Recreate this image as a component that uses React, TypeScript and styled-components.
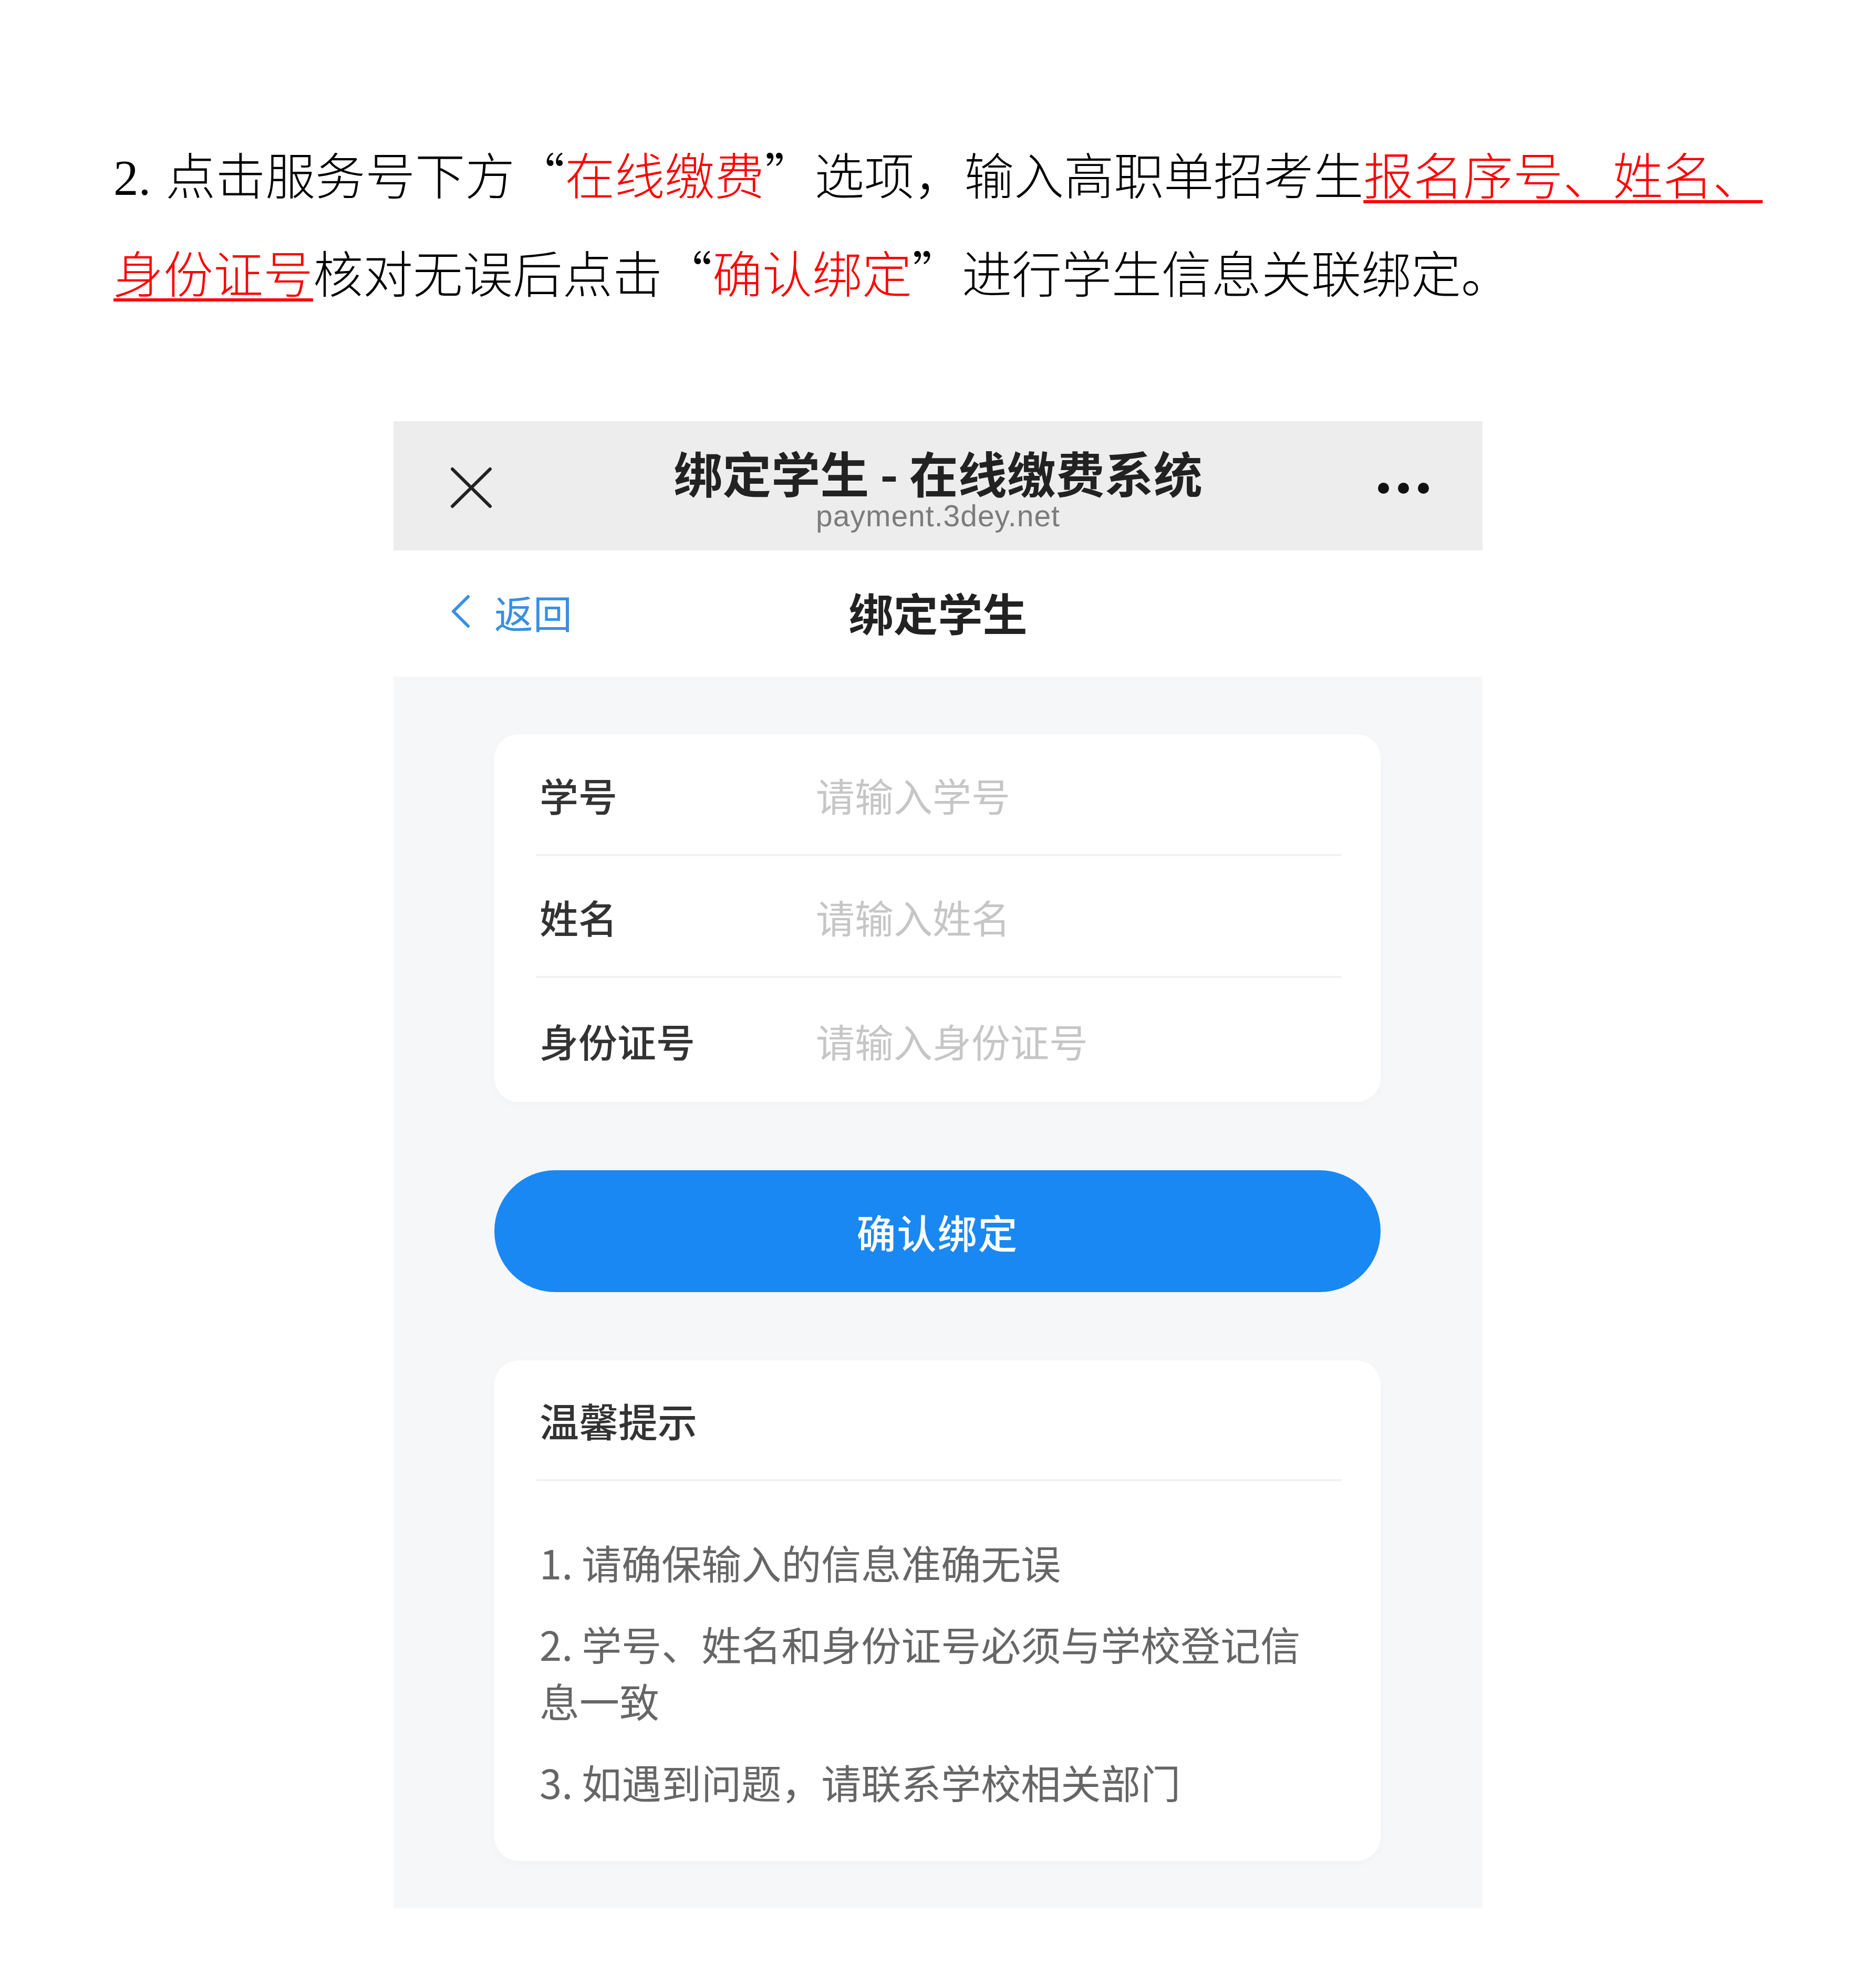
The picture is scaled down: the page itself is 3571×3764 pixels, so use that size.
import React from 'react';
import styled, { createGlobalStyle } from 'styled-components';

const GlobalStyle = createGlobalStyle`
  *, *::before, *::after {
    box-sizing: border-box;
  }
  html, body {
    margin: 0;
    padding: 0;
    background: #ffffff;
  }
  body {
    width: 3571px;
    min-height: 3764px;
    font-family: "Noto Sans CJK SC", "Noto Sans", sans-serif;
  }
`;

const ui = '"Noto Sans CJK SC", "Noto Sans", sans-serif';

interface Field {
  label: string;
  placeholder: string;
}

const fields: Field[] = [
  { label: '学号', placeholder: '请输入学号' },
  { label: '姓名', placeholder: '请输入姓名' },
  { label: '身份证号', placeholder: '请输入身份证号' },
];

const tips = [
  '1. 请确保输入的信息准确无误',
  '2. 学号、姓名和身份证号必须与学校登记信息一致',
  '3. 如遇到问题，请联系学校相关部门',
];

const CloseIcon = () => (
  <svg width="80" height="80" viewBox="0 0 80 80">
    <path d="M4 5 L76 76 M76 5 L4 76" stroke="#222" strokeWidth="6" strokeLinecap="round" fill="none" />
  </svg>
);

const BackChevron = () => (
  <svg width="40" height="64" viewBox="0 0 40 64">
    <path d="M34 4 L6 32 L34 60" stroke="#3a8fe0" strokeWidth="6" strokeLinecap="round" strokeLinejoin="round" fill="none" />
  </svg>
);

export default function App() {
  return (
    <>
      <GlobalStyle />
      <Page>
        <Instruction lang="zh-CN">
          <Num>2.</Num>点击服务号下方“<Red>在线缴费</Red>”选项，输入高职单招考生
          <RedLine>报名序号、姓名、</RedLine>
          <RedLine>身份证号</RedLine>核对无误后点击“<Red>确认绑定</Red>”进行学生信息关联绑定。
        </Instruction>

        <Phone lang="zh-CN">
          <TopBar>
            <TopLeft>
              <CloseIcon />
            </TopLeft>
            <TopTitle>
              <PageName>绑定学生 - 在线缴费系统</PageName>
              <Domain>payment.3dey.net</Domain>
            </TopTitle>
            <TopRight>
              <Dot />
              <Dot />
              <Dot />
            </TopRight>
          </TopBar>

          <NavBar>
            <BackLink>
              <BackChevron />
              <span>返回</span>
            </BackLink>
            <NavTitle>绑定学生</NavTitle>
            <span />
          </NavBar>

          <Body>
            <Card>
              {fields.map((f) => (
                <FieldRow key={f.label}>
                  <FieldLabel>{f.label}</FieldLabel>
                  <Placeholder>{f.placeholder}</Placeholder>
                </FieldRow>
              ))}
            </Card>

            <BindButton>确认绑定</BindButton>

            <Card>
              <TipsTitle>温馨提示</TipsTitle>
              <TipsList>
                {tips.map((t) => (
                  <TipItem key={t}>{t}</TipItem>
                ))}
              </TipsList>
            </Card>
          </Body>
        </Phone>
      </Page>
    </>
  );
}

const Page = styled.div`
  width: 3571px;
  min-height: 3764px;
  padding-top: 236px;
`;

const Instruction = styled.p`
  margin: 0 0 0 216px;
  width: 3180px;
  font-family: "Noto Sans CJK SC", sans-serif;
  font-weight: 300;
  font-size: 95px;
  line-height: 187px;
  color: #000;
  font-feature-settings: "fwid";
`;

const Num = styled.span`
  font-family: "Liberation Serif", serif;
  line-height: 1;
  margin-right: 28px;
`;

const Red = styled.span`
  color: #ff0000;
`;

const RedLine = styled(Red)`
  text-decoration: underline;
  text-decoration-thickness: 6px;
  text-underline-offset: 10px;
`;

const Phone = styled.div`
  width: 2073px;
  margin: 192px auto 0;
  background: #f6f7f9;
  font-family: ${ui};
`;

const TopBar = styled.div`
  height: 246px;
  background: #ededed;
  display: grid;
  grid-template-columns: 1fr auto 1fr;
  align-items: center;
`;

const TopLeft = styled.div`
  padding-left: 108px;
  padding-top: 6px;
  display: flex;
`;

const TopRight = styled.div`
  display: flex;
  justify-content: flex-end;
  gap: 17px;
  padding-right: 102px;
  padding-top: 8px;
`;

const Dot = styled.span`
  width: 21px;
  height: 21px;
  border-radius: 50%;
  background: #111;
`;

const TopTitle = styled.div`
  display: flex;
  flex-direction: column;
  align-items: center;
  align-self: start;
  padding-top: 50px;
  gap: 6px;
`;

const PageName = styled.div`
  font-size: 93px;
  font-weight: 700;
  line-height: 94px;
  color: #222;
  white-space: pre;
`;

const Domain = styled.div`
  font-family: "Liberation Sans", Arial, sans-serif;
  font-size: 57px;
  line-height: 60px;
  color: #7c7c7c;
  letter-spacing: 1px;
`;

const NavBar = styled.div`
  height: 240px;
  background: #ffffff;
  display: grid;
  grid-template-columns: 1fr auto 1fr;
  align-items: center;
`;

const BackLink = styled.div`
  display: flex;
  align-items: center;
  gap: 44px;
  padding-left: 108px;
  padding-bottom: 8px;
  font-size: 74px;
  color: #3a8fe0;
`;

const NavTitle = styled.div`
  font-size: 85px;
  font-weight: 700;
  color: #222;
  padding-bottom: 8px;
`;

const Body = styled.div`
  display: flex;
  flex-direction: column;
  padding: 110px 194px 90px 192px;
  gap: 130px;
`;

const Card = styled.div`
  background: #ffffff;
  border-radius: 46px;
  padding: 0 74px 0 80px;
  box-shadow: 0 4px 18px rgba(0, 0, 0, 0.025);
`;

const FieldRow = styled.div`
  height: 232px;
  display: flex;
  align-items: center;
  padding-left: 6px;
  border-bottom: 4px solid #f1f1f1;
  &:last-child {
    border-bottom: none;
    height: 236px;
  }
`;

const FieldLabel = styled.div`
  width: 526px;
  font-size: 74px;
  font-weight: 500;
  color: #333;
`;

const Placeholder = styled.div`
  font-size: 74px;
  color: #c6c6c6;
`;

const BindButton = styled.button`
  height: 232px;
  border: none;
  border-radius: 116px;
  background: #1a88f2;
  color: #ffffff;
  font-family: ${ui};
  font-size: 75px;
  font-weight: 500;
  letter-spacing: 2px;
`;

const TipsTitle = styled.div`
  height: 230px;
  display: flex;
  align-items: center;
  padding-left: 6px;
  font-size: 75px;
  font-weight: 500;
  color: #333;
  border-bottom: 4px solid #f1f1f1;
`;

const TipsList = styled.div`
  display: flex;
  flex-direction: column;
  gap: 47px;
  padding: 100px 70px 97px 6px;
`;

const TipItem = styled.div`
  font-size: 76px;
  line-height: 108px;
  color: #666;
`;
